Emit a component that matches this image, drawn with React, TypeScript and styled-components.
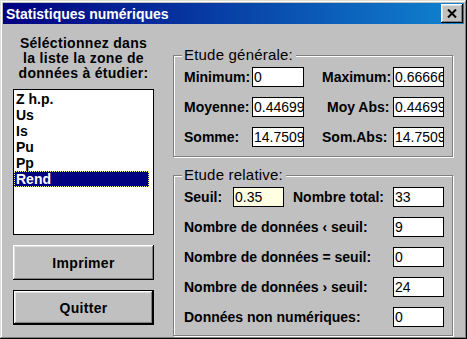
import styled, { createGlobalStyle } from "styled-components";

const GlobalStyle = createGlobalStyle`
  html, body {
    margin: 0;
    padding: 0;
    background: #c0c0c0;
  }
  * {
    box-sizing: border-box;
  }
`;

const font = `"Liberation Sans", Arial, sans-serif`;

const Window = styled.div`
  width: 467px;
  height: 339px;
  padding: 3px;
  display: flex;
  flex-direction: column;
  background: #c0c0c0;
  font-family: ${font};
  color: #000;
  box-shadow: inset -1px -1px #000, inset 1px 1px #dfdfdf,
    inset -2px -2px #808080, inset 2px 2px #fff;
`;

const TitleBar = styled.div`
  height: 23px;
  display: flex;
  align-items: center;
  justify-content: space-between;
  padding: 0 1px 0 3px;
  background: linear-gradient(to right, #000080, #1084d0);
  color: #fff;
  font-weight: bold;
  font-size: 14px;
`;

const CloseButton = styled.button`
  width: 22px;
  height: 19px;
  padding: 0;
  border: none;
  background: #c0c0c0;
  display: flex;
  align-items: center;
  justify-content: center;
  box-shadow: inset -1px -1px #000, inset 1px 1px #fff,
    inset -2px -2px #808080, inset 2px 2px #dfdfdf;
`;

const Body = styled.div`
  flex: 1;
  display: flex;
  padding: 12px 0 0 10px;
`;

const LeftCol = styled.div`
  width: 141px;
  display: flex;
  flex-direction: column;
`;

const Prompt = styled.div`
  text-align: center;
  font-weight: bold;
  font-size: 14px;
  line-height: 15px;
  letter-spacing: 0.3px;
`;

const ListBox = styled.div`
  margin-top: 8px;
  height: 146px;
  border: 1px solid #000;
  background: #fff;
  padding-top: 1px;
`;

const ListItem = styled.div<{ $selected?: boolean }>`
  width: 135px;
  height: 16px;
  line-height: 16px;
  padding-left: 2px;
  font-weight: bold;
  font-size: 14px;
  background: ${(p) => (p.$selected ? "#000080" : "transparent")};
  color: ${(p) => (p.$selected ? "#fff" : "#000")};
  outline: ${(p) => (p.$selected ? "1px dotted #ffff80" : "none")};
  outline-offset: -1px;
`;

const Button = styled.button<{ $default?: boolean }>`
  margin-top: 10px;
  width: 141px;
  height: 35px;
  padding: 0;
  border: ${(p) => (p.$default ? "1px solid #000" : "none")};
  background: #c0c0c0;
  font-family: ${font};
  font-weight: bold;
  font-size: 14px;
  letter-spacing: 0.3px;
  color: #000;
  box-shadow: inset -1px -1px #000, inset 1px 1px #fff,
    inset -2px -2px #808080, inset 2px 2px #dfdfdf;
`;

const RightCol = styled.div`
  width: 280px;
  margin-left: 19px;
  display: flex;
  flex-direction: column;
`;

const Group = styled.div<{ $height: number; $top: number }>`
  position: relative;
  height: ${(p) => p.$height}px;
  margin-top: ${(p) => p.$top}px;
  padding: 11px 0 0 10px;
  border: 1px solid #808080;
  box-shadow: inset 1px 1px #fff, 1px 1px #fff;
`;

const Caption = styled.span`
  position: absolute;
  top: -9px;
  left: 8px;
  padding: 0 3px 0 2px;
  background: #c0c0c0;
  font-size: 15px;
  line-height: 16px;
  letter-spacing: 0.2px;
`;

const GeneralGrid = styled.div`
  display: grid;
  grid-template-columns: 68px 52px 89px 51px;
  grid-auto-rows: 20px;
  row-gap: 10px;
  align-items: center;
`;

const Label = styled.span<{ $indent?: number; $width?: number }>`
  padding-left: ${(p) => p.$indent ?? 0}px;
  width: ${(p) => (p.$width ? `${p.$width}px` : "auto")};
  flex-shrink: 0;
  font-weight: bold;
  font-size: 14px;
  white-space: nowrap;
`;

const TextBox = styled.div<{ $bg?: string; $width?: number }>`
  width: ${(p) => p.$width ?? 51}px;
  height: 20px;
  flex-shrink: 0;
  padding: 0 1px;
  border: 1px solid #000;
  background: ${(p) => p.$bg ?? "#fff"};
  font-size: 14px;
  line-height: 18px;
  white-space: nowrap;
  overflow: hidden;
`;

const RelativeRows = styled.div`
  display: flex;
  flex-direction: column;
  gap: 10px;
`;

const Row = styled.div`
  height: 20px;
  display: flex;
  align-items: center;
`;

const counts = [
  ["Nombre de données ‹ seuil:", "9"],
  ["Nombre de données = seuil:", "0"],
  ["Nombre de données › seuil:", "24"],
  ["Données non numériques:", "0"],
];

const zones = ["Z h.p.", "Us", "Is", "Pu", "Pp", "Rend"];

export default function App() {
  return (
    <>
      <GlobalStyle />
      <Window>
        <TitleBar>
          <span>Statistiques numériques</span>
          <CloseButton aria-label="Fermer">
            <svg width="10" height="9" viewBox="0 0 10 9">
              <path
                d="M1 0.5 L9 8.5 M9 0.5 L1 8.5"
                stroke="#000"
                strokeWidth="2"
                fill="none"
              />
            </svg>
          </CloseButton>
        </TitleBar>
        <Body>
          <LeftCol>
            <Prompt>
              Séléctionnez dans
              <br />
              la liste la zone de
              <br />
              données à étudier:
            </Prompt>
            <ListBox>
              {zones.map((z) => (
                <ListItem key={z} $selected={z === "Rend"}>
                  {z}
                </ListItem>
              ))}
            </ListBox>
            <Button>Imprimer</Button>
            <Button $default>Quitter</Button>
          </LeftCol>
          <RightCol>
            <Group $height={102} $top={19}>
              <Caption>Etude générale:</Caption>
              <GeneralGrid>
                <Label>Minimum:</Label>
                <TextBox $width={52}>0</TextBox>
                <Label $indent={18}>Maximum:</Label>
                <TextBox>0.66666</TextBox>
                <Label>Moyenne:</Label>
                <TextBox $width={52}>0.44699</TextBox>
                <Label $indent={23}>Moy Abs:</Label>
                <TextBox>0.44699</TextBox>
                <Label>Somme:</Label>
                <TextBox $width={52}>14.7509</TextBox>
                <Label $indent={18}>Som.Abs:</Label>
                <TextBox>14.7509</TextBox>
              </GeneralGrid>
            </Group>
            <Group $height={161} $top={18}>
              <Caption>Etude relative:</Caption>
              <RelativeRows>
                <Row>
                  <Label $width={49}>Seuil:</Label>
                  <TextBox $bg="#ffffe1">0.35</TextBox>
                  <Label $indent={9} $width={109}>
                    Nombre total:
                  </Label>
                  <TextBox>33</TextBox>
                </Row>
                {counts.map(([label, value]) => (
                  <Row key={label}>
                    <Label $width={209}>{label}</Label>
                    <TextBox>{value}</TextBox>
                  </Row>
                ))}
              </RelativeRows>
            </Group>
          </RightCol>
        </Body>
      </Window>
    </>
  );
}
